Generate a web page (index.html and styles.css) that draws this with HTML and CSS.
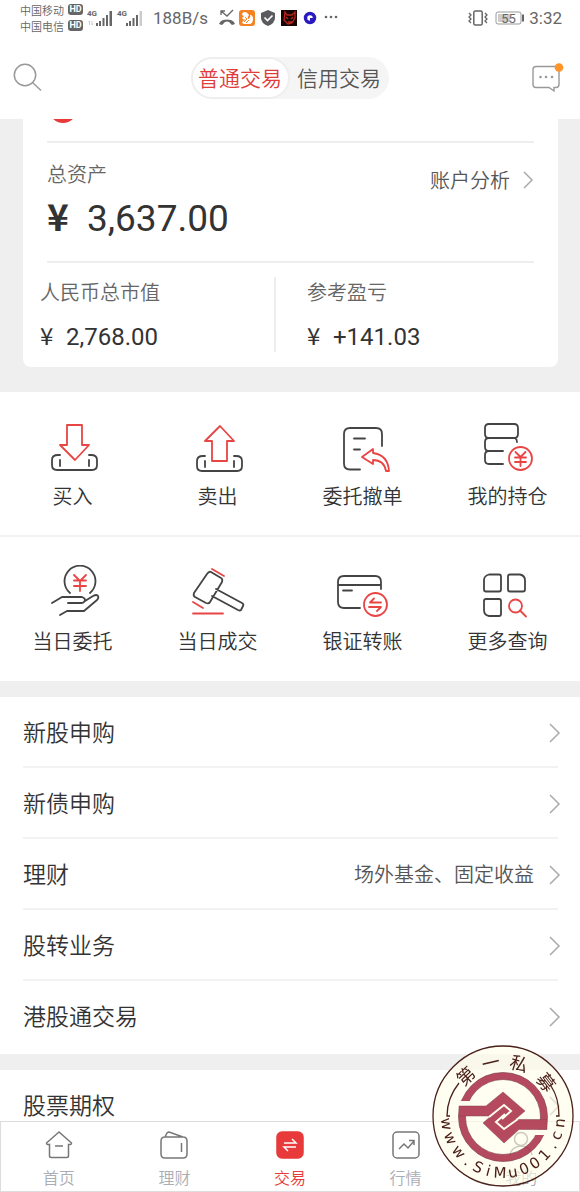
FILE: index.html
```
<!DOCTYPE html>
<html lang="zh-CN">

<head>
    <meta charset="utf-8">
    <meta name="viewport" content="width=device-width, initial-scale=1">
    <title>普通交易</title>
    <link rel="stylesheet" href="styles.css">
</head>

<body>
    <div class="status-bar">
        <div class="carriers">
            <div class="carrier">中国移动<span class="hd">HD</span></div>
            <div class="carrier">中国电信<span class="hd">HD</span></div>
        </div>
        <svg class="signals" width="56" height="18" viewBox="0 0 56 18">
            <g fill="#666">
                <text x="0" y="7" class="signal-text">4G</text>
                <text x="30" y="7" class="signal-text">4G</text>
                <path d="M9 14h2v3H9zM12 12h2v5h-2zM15.500 9h2v8h-2zM19 6h2v11h-2zM22.500 2h2.500v15h-2.500zM39 14h2v3h-2zM42 12h2v5h-2zM45.500 9h2v8h-2zM49 6h2v11h-2z" />
                <path fill="#ccc" d="M52.500 2h2.500v15h-2.500z" />
            </g>
            <path d="M2.500 12v4M1.300 13l1.200-1.200M5 12v4l1.200-1.200" fill="none" stroke="#ccc" />
        </svg>
        <span class="speed">188B/s</span>
        <svg class="notices" width="122" height="18" viewBox="0 0 122 18">
            <path d="M3 2l6 5 6-6M3 6V2h4" fill="none" stroke="#666" stroke-width="1.300" />
            <path d="M1 15q1-3 4-4 4-1 8 0 3 1 4 4l-3 1-3-3q-2-1-4 0l-3 3z" fill="#666" />
            <rect x="21" y="1" width="16" height="16" rx="3" fill="#f58220" />
            <path d="M24 6q0-3 3-3 2 0 4 3-2 2-1 4 3-1 2-4 3 0 3 4 0 5-4 5h-5q-3-1-1-3l3-1q-3 0-4-2l2-2z" fill="#fff" />
            <path d="M27 8l2 2-3 3M31 11l-3 3" stroke="#f58220" fill="none" />
            <path d="M50 1l7 3v5q0 5-7 8-7-3-7-8V4z" fill="#5a5a5f" />
            <path d="M46.500 8.500l3 3 5-5" fill="none" stroke="#fff" stroke-width="1.600" />
            <rect x="63" y="1" width="16" height="16" fill="#180505" />
            <path d="M67 3l2 3h5l3-3v6l-3 5-4 1-4-4zM68 8l2 2M75 8l-2 2M70 13h4" fill="none" stroke="#b8271b" stroke-width="1.300" />
            <circle cx="92" cy="9" r="4.500" fill="none" stroke="#2a1ac0" stroke-width="3.500" />
            <path d="M92 9h3v3h-3z" fill="#2a1ac0" />
            <g fill="#666">
                <circle cx="108" cy="8" r="1.300" />
                <circle cx="113" cy="8" r="1.300" />
                <circle cx="118" cy="8" r="1.300" />
            </g>
        </svg>
        <div class="status-right">
            <svg width="20" height="16" viewBox="0 0 20 16">
                <rect x="5.800" y="1" width="8.400" height="14" rx="1.500" fill="none" stroke="#666" stroke-width="1.500" />
                <path d="M1 3l2 2-2 2 2 2-2 2 2 2M17 3l2 2-2 2 2 2-2 2 2 2" fill="none" stroke="#666" stroke-width="1.300" />
            </svg>
            <svg class="battery" width="29" height="14" viewBox="0 0 29 14">
                <rect x="1" y="1" width="25" height="12" rx="2" fill="#fff" stroke="#999" />
                <rect x="3" y="3" width="12" height="8" fill="#ccc" />
                <path d="M28 3.500v7" stroke="#666" stroke-width="2" />
                <text x="13.500" y="12" class="battery-text">55</text>
            </svg>
            <span>3:32</span>
        </div>
    </div>

    <header class="top-bar">
        <button class="icon-button" aria-label="搜索">
            <svg width="30" height="30" viewBox="0 0 30 30" fill="none" stroke="#999" stroke-width="1.500">
                <circle cx="12" cy="12" r="10.700" />
                <path d="M19.500 19.500L28 27.500" />
            </svg>
        </button>
        <div class="switch">
            <button class="switch-item active">普通交易</button>
            <button class="switch-item">信用交易</button>
        </div>
        <button class="icon-button" aria-label="消息">
            <svg width="32" height="30" viewBox="0 0 32 30">
                <path d="M4 3.500h20q3 0 3 3v15q0 3-3 3h-2v3.500l-5-3.500H4q-3 0-3-3v-15q0-3 3-3z" fill="none" stroke="#999" stroke-width="1.400" />
                <g fill="#999">
                    <circle cx="8.500" cy="14" r="1.300" />
                    <circle cx="14" cy="14" r="1.300" />
                    <circle cx="20" cy="14" r="1.300" />
                </g>
                <circle cx="27" cy="4.500" r="4.300" fill="#ff9429" />
            </svg>
        </button>
    </header>

    <main>
        <section class="account">
            <div class="card">
                <div class="card-head">
                    <svg width="24" height="24" viewBox="0 0 24 24">
                        <circle cx="12" cy="10" r="14" fill="#e83a3a" />
                    </svg>
                </div>
                <div class="total">
                    <div>
                        <div class="label">总资产</div>
                        <div class="total-value"><b class="yen">¥</b>3,637.00</div>
                    </div>
                    <a class="analysis" href="#">账户分析
                        <svg width="12" height="18" viewBox="0 0 12 18"><path d="M2 1l8 8-8 8" /></svg>
                    </a>
                </div>
                <div class="stats">
                    <div class="stat">
                        <div class="label">人民币总市值</div>
                        <div class="stat-value"><span class="yen">¥</span>2,768.00</div>
                    </div>
                    <div class="stat">
                        <div class="label">参考盈亏</div>
                        <div class="stat-value"><span class="yen">¥</span>+141.03</div>
                    </div>
                </div>
            </div>
        </section>

        <nav class="actions">
            <a class="action" href="#">
                <svg width="61" height="56" viewBox="0 0 61 56">
                    <path d="M18 35h-2q-6 0-6 5v5q0 5 5 5h35q5 0 5-5v-5q0-5-6-5h-2M18 40v6M47 40v6" />
                    <path class="red" d="M25 5h15v20h7L33 40 18 25h7z" />
                </svg>
                买入
            </a>
            <a class="action" href="#">
                <svg width="61" height="56" viewBox="0 0 61 56">
                    <path d="M18 36h-2q-6 0-6 5v5q0 5 5 5h35q5 0 5-5v-5q0-5-6-5h-2M18 41v6M47 41v6" />
                    <path class="red" d="M25 41h15V21h7L33 6 18 21h7z" />
                </svg>
                卖出
            </a>
            <a class="action" href="#">
                <svg width="61" height="56" viewBox="0 0 61 56">
                    <path d="M28 49.500H18q-6 0-6-6V14q0-6 6-6h26q6 0 6 6v12M22 18.500h11M22 29.500h6" />
                    <path class="red" d="M30 37l11-8v4q15 2 16 18h-3q-2-11-13-11v4z" />
                </svg>
                委托撤单
            </a>
            <a class="action" href="#">
                <svg width="61" height="56" viewBox="0 0 61 56">
                    <path d="M12 4h25q4 0 4 4v6q0 4-4 4H12q-4 0-4-4V8q0-4 4-4zM12 18q-4 0-4 4v5q0 4 4 4h14M12 31q-4 0-4 4v5q0 4 4 4h14M38 18q2 1 2 4" />
                    <circle class="red" cx="43.500" cy="38.500" r="11.500" />
                    <path class="red" d="M38.500 32l5 5 5-5M38 37.500h11M38 42h11M43.500 37v9" />
                </svg>
                我的持仓
            </a>
        </nav>
        <nav class="actions">
            <a class="action" href="#">
                <svg width="61" height="56" viewBox="0 0 61 56">
                    <path d="M28 28a15.500 15.500 0 1 1 20 0M10 38l10-6h20q3 1 3 3t-3 3H26M43 36l8-5q4-2 5 0t-1 4L42 46H25l-7 4" />
                    <path class="red" d="M32 10l6 6 6-6M32 15.500h12M32 21h12M38 16v10" />
                </svg>
                当日委托
            </a>
            <a class="action" href="#">
                <svg width="61" height="56" viewBox="0 0 61 56">
                    <path d="M20 9q2-3 4-2l10 6q2 1 1 4L23 37q-1 2-4 1L8 32q-2-1-1-4zM29 24l26 14q2 1 1 3l-2 4q-1 1-3 0L25 31" />
                    <path class="red" d="M25 4l12 7M6 37l10 6" />
                    <path class="red" d="M6 48.500h30" />
                </svg>
                当日成交
            </a>
            <a class="action" href="#">
                <svg width="61" height="56" viewBox="0 0 61 56">
                    <path d="M28 43H12q-6 0-6-6V17q0-6 6-6h31q6 0 6 6v7M6 20h43M11 25.500h9" />
                    <circle class="red" cx="43.500" cy="39.500" r="11.500" />
                    <path class="red" d="M49 37.500H38l4-4M37 42h12l-4 4" />
                </svg>
                银证转账
            </a>
            <a class="action" href="#">
                <svg width="61" height="56" viewBox="0 0 61 56">
                    <path d="M12 9.500h10q2 0 2 2v13q0 2-2 2H9q-2 0-2-2V15q0-4 5-5.500zM33 9.500h10q5 1 5 6v9q0 2-2 2H33q-2 0-2-2v-13q0-2 2-2zM9 34h13q2 0 2 2v13q0 2-2 2H12q-5-1-5-6v-9q0-2 2-2z" />
                    <circle class="red" cx="38.500" cy="41" r="6.500" />
                    <path class="red" d="M43 45.500l6 6" />
                </svg>
                更多查询
            </a>
        </nav>

        <div class="list">
            <a class="row" href="#">新股申购<svg width="12" height="20" viewBox="0 0 12 20"><path d="M1 1l9 9-9 9" /></svg></a>
            <a class="row" href="#">新债申购<svg width="12" height="20" viewBox="0 0 12 20"><path d="M1 1l9 9-9 9" /></svg></a>
            <a class="row" href="#">理财<span class="note">场外基金、固定收益</span><svg width="12" height="20" viewBox="0 0 12 20"><path d="M1 1l9 9-9 9" /></svg></a>
            <a class="row" href="#">股转业务<svg width="12" height="20" viewBox="0 0 12 20"><path d="M1 1l9 9-9 9" /></svg></a>
            <a class="row" href="#">港股通交易<svg width="12" height="20" viewBox="0 0 12 20"><path d="M1 1l9 9-9 9" /></svg></a>
        </div>
        <div class="list">
            <a class="row" href="#">股票期权<svg width="12" height="20" viewBox="0 0 12 20"><path d="M1 1l9 9-9 9" /></svg></a>
        </div>
    </main>

    <nav class="tab-bar">
        <a class="tab" href="#">
            <svg width="28" height="28" viewBox="0 0 28 28"><path d="M14 1L1.500 12q0 2 3 1.500V25q0 1.500 2 1.500h15q2 0 2-1.500V13.500q3 .500 3-1.500zM10 15h8" /></svg>
            首页
        </a>
        <a class="tab" href="#">
            <svg width="28" height="28" viewBox="0 0 28 28"><path d="M5 6h18q4 0 4 4v13q0 4-4 4H5q-4 0-4-4V10q0-4 4-4zM5 6l2-4q1-1 2-1l14 5M21.500 12v9" /></svg>
            理财
        </a>
        <a class="tab active" href="#">
            <svg width="28" height="28" viewBox="0 0 28 28">
                <rect x="1" y="1" width="26" height="26" rx="5" />
                <path d="M8 12h12l-4-4M20 16H8l4 4" />
            </svg>
            交易
        </a>
        <a class="tab" href="#">
            <svg width="28" height="28" viewBox="0 0 28 28">
                <rect x="1" y="1" width="26" height="26" rx="4" />
                <path d="M7 18l5-5 4 4 6-7M17 9.500h5V14" />
            </svg>
            行情
        </a>
        <a class="tab" href="#">
            <svg width="28" height="28" viewBox="0 0 28 28">
                <circle cx="14" cy="8" r="6.500" />
                <path d="M3 24q1-8 11-9 10 1 11 9" />
            </svg>
            我的
        </a>
    </nav>

    <svg class="stamp" width="142" height="142" viewBox="-71 -71 142 142">
        <circle r="70" fill="#fffde6" fill-opacity="0.620" stroke="#4a2019" stroke-width="1.300" />
        <g fill="none" stroke="#4a2019" stroke-width="1.300">
            <path d="M-53 0h-3q0-18 12-33M53 0h3q0-18-8-30" />
        </g>
        <g opacity="0.850">
            <circle cy="1" r="41" fill="none" stroke="#a82a44" stroke-width="7" />
            <circle cy="1" r="44.500" fill="none" stroke="#6f2636" stroke-width="0.700" />
            <circle cy="1" r="37.500" fill="none" stroke="#6f2636" stroke-width="0.700" />
            <path fill="#fffdec" d="M-47-15h17v5h-17zM30 13.500h17V19H30z" />
            <path fill="#a82a44" stroke="#6f2636" stroke-width="0.500" d="M-44-10h27L0-24 22-5 12 3.500h32v10H16L1 27-20 7-12 0h-32z" />
            <path fill="none" stroke="#fffdec" stroke-width="2" d="M-14 1L1-11 8-5-1 3M15 3L1 13-7 6 2-2" />
        </g>
        <g class="stamp-name">
            <text y="-48" transform="rotate(-43)">第</text>
            <text y="-48" transform="rotate(-13)">一</text>
            <text y="-48" transform="rotate(17)">私</text>
            <text y="-48" transform="rotate(52)">募</text>
        </g>
        <g class="stamp-site">
            <text y="62" transform="rotate(82)">w</text>
            <text y="62" transform="rotate(67)">w</text>
            <text y="62" transform="rotate(51)">w</text>
            <text y="62" transform="rotate(38)">.</text>
            <text y="62" transform="rotate(26)">S</text>
            <text y="62" transform="rotate(15)">i</text>
            <text y="62" transform="rotate(3)">M</text>
            <text y="62" transform="rotate(-10)">u</text>
            <text y="62" transform="rotate(-22)">0</text>
            <text y="62" transform="rotate(-34)">0</text>
            <text y="62" transform="rotate(-47)">1</text>
            <text y="62" transform="rotate(-59)">.</text>
            <text y="62" transform="rotate(-70)">c</text>
            <text y="62" transform="rotate(-83)">n</text>
        </g>
    </svg>
</body>

</html>
```
FILE: styles.css
```
* {
    box-sizing: border-box;
}

body {
    margin: 0;
    height: 100vh;
    display: flex;
    flex-direction: column;
    background-color: white;
    color: #333;
    font-family: Roboto, "Noto Sans CJK SC", sans-serif;
    font-weight: 350;
    font-size: 20px;
}

a {
    color: inherit;
    text-decoration: none;
}

button {
    border: 0;
    padding: 0;
    background: none;
    font: inherit;
    color: inherit;
}

svg {
    display: block;
    flex: none;
}

/* phone status bar */
.status-bar {
    flex: none;
    display: flex;
    align-items: center;
    height: 35px;
    padding: 0 18px 0 20px;
    color: #666;
    font-size: 17px;
    font-weight: 400;
}

.carrier {
    display: flex;
    align-items: center;
    gap: 4px;
    height: 16px;
    font-size: 11px;
    font-weight: 350;
}

.hd {
    width: 15px;
    border-radius: 3px;
    background-color: #666;
    color: white;
    font-size: 9px;
    font-weight: 700;
    line-height: 11px;
    text-align: center;
}

.signals {
    margin-left: 4px;
}

.signal-text {
    font-size: 8px;
    font-weight: 700;
}

.speed {
    margin-left: 10px;
}

.notices {
    margin-left: 10px;
}

.status-right {
    display: flex;
    align-items: center;
    margin-left: auto;
}

.battery {
    margin: 0 5px 0 7px;
}

.battery-text {
    fill: #666;
    font-size: 13px;
    text-anchor: middle;
}

/* header */
.top-bar {
    flex: none;
    display: flex;
    align-items: center;
    justify-content: space-between;
    height: 84px;
    padding: 2px 16px 0 13px;
}

.icon-button {
    min-width: 34px;
}

.icon-button:last-child {
    min-width: 32px;
}

.switch {
    display: flex;
    height: 42px;
    border-radius: 21px;
    background-color: #f5f5f5;
    color: #555;
    font-size: 21px;
}

.switch-item {
    width: 99px;
    border-radius: 21px;
    padding-bottom: 2px;
}

.switch-item.active {
    border: 2px solid #eee;
    background-color: white;
    color: #e03c3c;
}

main {
    flex: 1;
    min-height: 0;
    overflow: hidden;
}

/* account card */
.account {
    padding: 0 22px 25px 23px;
    background-color: #efefef;
}

.card {
    padding: 0 24px;
    border-radius: 0 0 8px 8px;
    background-color: white;
}

.card-head {
    height: 22px;
    overflow: hidden;
}

.card-head svg {
    margin: -20px 0 0 4px;
}

.total {
    display: flex;
    justify-content: space-between;
    height: 122px;
    padding: 16px 0;
    border: solid #eee;
    border-width: 2px 0;
}

.label {
    color: #666;
    line-height: 32px;
}

.total-value {
    font-size: 37px;
    font-weight: 400;
    line-height: 56px;
}

.analysis {
    display: flex;
    align-items: center;
    gap: 12px;
    height: 41px;
    color: #555;
}

.analysis path,
.row path {
    fill: none;
    stroke: #aaa;
    stroke-width: 1.5;
}

.stats {
    display: flex;
    height: 104px;
    margin: 0 -7px;
    padding: 14px 0 15px;
}

.stat {
    flex: 1;
}

.stat + .stat {
    padding-left: 31px;
    border-left: 2px solid #eee;
}

.stat-value {
    margin-top: 12px;
    font-size: 24px;
    font-weight: 400;
    line-height: 32px;
}

.yen {
    display: inline-block;
    width: 26px;
    font-family: "Noto Sans CJK SC", sans-serif;
    line-height: 24px;
}

.total-value .yen {
    width: 40px;
}

/* action grid */
.actions {
    display: grid;
    grid-template-columns: repeat(4, 1fr);
    height: 145px;
    border-bottom: 2px solid #f2f2f2;
}

.actions + .actions {
    height: 144px;
    border-bottom: 0;
}

.action {
    display: flex;
    flex-direction: column;
    align-items: center;
    padding-top: 28px;
    line-height: 42px;
}

.action svg {
    fill: none;
    stroke: #444;
    stroke-width: 1.8;
    stroke-linecap: round;
    stroke-linejoin: round;
}

.action .red {
    stroke: #e84545;
}

/* menu rows */
.list {
    padding: 0 22px 2px 23px;
    border-top: 16px solid #efefef;
}

.row {
    display: flex;
    align-items: center;
    height: 71px;
    padding-bottom: 1px;
    border-bottom: 2px solid #f2f2f2;
    font-size: 23px;
}

.row:last-child {
    border-color: transparent;
}

.row svg {
    margin: 4px -3px 0 auto;
}

.note {
    margin-left: auto;
    color: #555;
    font-size: 20px;
}

.note + svg {
    margin-left: 15px;
}

/* bottom tabs */
.tab-bar {
    flex: none;
    display: flex;
    height: 71px;
    border: 1px solid #ddd;
    background-color: white;
    color: #aaadb3;
    font-size: 16px;
}

.tab {
    flex: 1;
    display: flex;
    flex-direction: column;
    align-items: center;
    padding-top: 9px;
    line-height: 40px;
}

.tab svg {
    fill: none;
    stroke: #777;
    stroke-width: 1.5;
}

.tab.active {
    color: #e83a3a;
}

.tab.active rect {
    fill: #e83a3a;
    stroke: #e83a3a;
}

.tab.active path {
    stroke: white;
}

/* round site stamp over the corner */
.stamp {
    position: fixed;
    right: 6px;
    bottom: 5px;
    pointer-events: none;
}

.stamp text {
    fill: #4a2019;
    text-anchor: middle;
}

.stamp-name {
    font-size: 18px;
    font-weight: 400;
}

.stamp-site {
    font-family: "DejaVu Sans", sans-serif;
    font-size: 15px;
    font-weight: 400;
}
```
